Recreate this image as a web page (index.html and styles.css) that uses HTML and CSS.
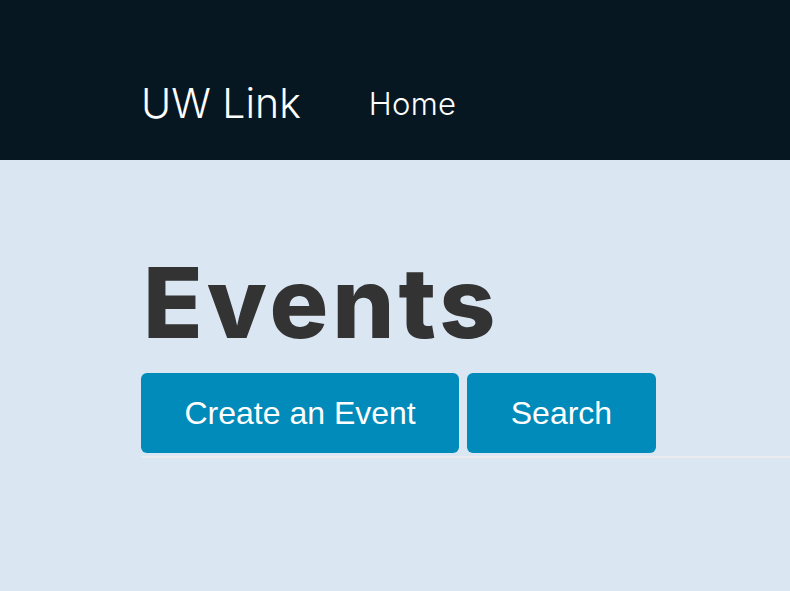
FILE: index.html
```html
<!DOCTYPE html>
<html>
<head>
<meta charset="utf-8">
<link rel="stylesheet" href="styles.css">
</head>
<body>
<header class="topbar">
  <a class="brand" href="#">UW Link</a>
  <nav class="nav"><a class="nav-link" href="#">Home</a></nav>
</header>
<main class="main">
  <section class="events">
    <h1 class="title">Events</h1>
    <div class="actions">
      <button class="btn">Create an Event</button>
      <button class="btn">Search</button>
    </div>
  </section>
</main>
</body>
</html>
```
FILE: styles.css
```css
html, body {
  margin: 0;
  padding: 0;
  height: 100%;
}
body {
  background: #dae6f2;
  font-family: "Liberation Sans", Arial, sans-serif;
}
.topbar {
  height: 160px;
  background: #071722;
  display: flex;
  align-items: center;
  padding-left: 141px;
  padding-top: 46px;
  box-sizing: border-box;
}
.brand {
  font-family: Inter, sans-serif;
  font-weight: 300;
  font-size: 41px;
  letter-spacing: 0;
  color: #ffffff;
  text-decoration: none;
}
.nav {
  margin-left: 68px;
}
.nav-link {
  font-family: Inter, sans-serif;
  font-weight: 300;
  font-size: 31px;
  letter-spacing: 0.3px;
  color: #ffffff;
  text-decoration: none;
}
.main {
  padding-left: 141px;
  padding-top: 72px;
}
.events {
  border-bottom: 2px solid #e9ebee;
  padding-bottom: 3px;
}
.title {
  margin: 0;
  font-family: Inter, sans-serif;
  font-weight: 800;
  font-size: 98px;
  line-height: 141px;
  letter-spacing: 4px;
  color: #333333;
  margin-left: 2px;
}
.actions {
  display: flex;
  gap: 8px;
}
.btn {
  background: #008bba;
  color: #ffffff;
  border: none;
  border-radius: 6px;
  font-family: "Liberation Sans", Arial, sans-serif;
  font-size: 32px;
  height: 80px;
  padding: 0 43.5px;
}
```
